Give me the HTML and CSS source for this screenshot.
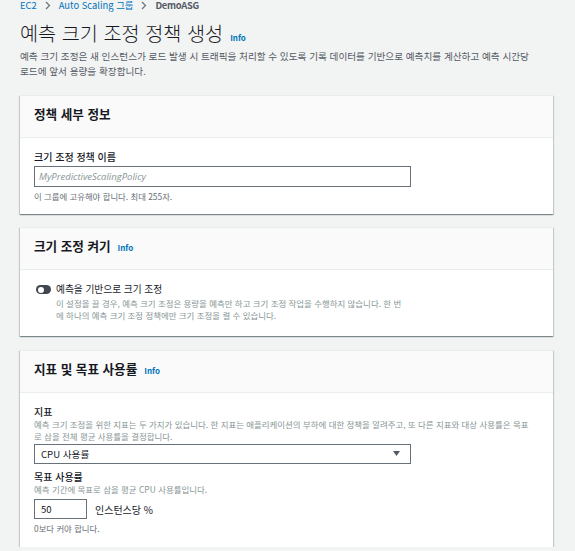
FILE: index.html
```html
<!DOCTYPE html>
<html lang="ko">
<head>
	<meta charset="utf-8" />
	<title>예측 크기 조정 정책 생성</title>
	<link rel="stylesheet" href="styles.css">
</head>
<body>
	<!-- 경로 -->
	<nav class="crumbs">
		<a href="#">EC2</a>
		<svg class="chev" width="6" height="9" viewBox="0 0 6 9"><path d="M1 1l3.5 3.5L1 8" fill="none" stroke="#687078" stroke-width="1.2"/></svg>
		<a href="#">Auto Scaling 그룹</a>
		<svg class="chev" width="6" height="9" viewBox="0 0 6 9"><path d="M1 1l3.5 3.5L1 8" fill="none" stroke="#687078" stroke-width="1.2"/></svg>
		<span class="here">DemoASG</span>
	</nav>

	<h1 class="page-title">예측 크기 조정 정책 생성<a class="info" href="#">Info</a></h1>
	<p class="page-desc">예측 크기 조정은 새 인스턴스가 로드 발생 시 트래픽을 처리할 수 있도록 기록 데이터를 기반으로 예측치를 계산하고 예측 시간당<br>로드에 앞서 용량을 확장합니다.</p>

	<!-- 정책 세부 정보 -->
	<section class="card">
		<div class="card-head">
			<h2>정책 세부 정보</h2>
		</div>
		<div class="card-body">
			<div class="label">크기 조정 정책 이름</div>
			<div class="field wide">
				<span class="placeholder">MyPredictiveScalingPolicy</span>
			</div>
			<div class="hint">이 그룹에 고유해야 합니다. 최대 255자.</div>
		</div>
	</section>

	<!-- 크기 조정 켜기 -->
	<section class="card">
		<div class="card-head">
			<h2>크기 조정 켜기</h2><a class="info" href="#">Info</a>
		</div>
		<div class="card-body toggle-body">
			<div class="toggle-row">
				<span class="toggle"><span class="knob"></span></span>
				<div>
					<div class="toggle-label">예측을 기반으로 크기 조정</div>
					<div class="desc toggle-desc">이 설정을 끌 경우, 예측 크기 조정은 용량을 예측만 하고 크기 조정 작업을 수행하지 않습니다. 한 번<br>에 하나의 예측 크기 조정 정책에만 크기 조정을 켤 수 있습니다.</div>
				</div>
			</div>
		</div>
	</section>

	<!-- 지표 및 목표 사용률 -->
	<section class="card">
		<div class="card-head">
			<h2>지표 및 목표 사용률</h2><a class="info" href="#">Info</a>
		</div>
		<div class="card-body last-body">
			<div class="label">지표</div>
			<div class="desc">예측 크기 조정을 위한 지표는 두 가지가 있습니다. 한 지표는 애플리케이션의 부하에 대한 정책을 알려주고, 또 다른 지표와 대상 사용률은 목표<br>로 삼을 전체 평균 사용률을 결정합니다.</div>
			<div class="field wide select">
				<span>CPU 사용률</span>
				<svg width="7" height="6" viewBox="0 0 7 6"><path d="M0 0h7L3.5 5z" fill="#545b64"/></svg>
			</div>

			<div class="label spaced">목표 사용률</div>
			<div class="desc">예측 기간에 목표로 삼을 평균 CPU 사용률입니다.</div>
			<div class="target-row">
				<div class="field small"><span>50</span></div>
				<span class="unit">인스턴스당 %</span>
			</div>
			<div class="hint">0보다 커야 합니다.</div>
		</div>
	</section>
</body>
</html>
```

FILE: styles.css
```css
body {
	margin: 0;
	padding: 0 22px 0 20px;
	background-color: #f2f3f3;
	font-family: "Noto Sans CJK KR", "Noto Sans", sans-serif;
	color: #16191f;
}

a {
	text-decoration: none;
	color: #0073bb;
}

/* 경로 */
.crumbs {
	display: flex;
	align-items: center;
	gap: 7px;
	height: 10px;
	font-size: 9.4px;
	line-height: 10px;
}

.crumbs .here {
	color: #545b64;
	font-weight: 700;
	letter-spacing: -0.3px;
}

.chev {
	margin: 0 1px;
}

.page-title {
	display: flex;
	align-items: baseline;
	height: 26px;
	margin: 10px 0 0;
	font-size: 19.7px;
	line-height: 26px;
	font-weight: 300;
	color: #16191f;
}

.info {
	font-size: 8px;
	font-weight: 700;
	margin-left: 7px;
}

.page-desc {
	margin: 3px 0 0;
	font-size: 9.65px;
	line-height: 15px;
	color: #545b64;
	white-space: nowrap;
}

/* 카드 */
.card {
	margin-top: 16px;
	background-color: #fff;
	border-top: 1px solid #eaeded;
	box-shadow: 0 1px 1px 0 rgba(0, 28, 36, 0.3), 1px 1px 1px 0 rgba(0, 28, 36, 0.15), -1px 1px 1px 0 rgba(0, 28, 36, 0.15);
}

.card + .card {
	margin-top: 13px;
}

.card + .card + .card {
	margin-top: 14px;
}

.card-head {
	display: flex;
	align-items: baseline;
	box-sizing: border-box;
	height: 42px;
	padding: 10px 14px 0;
	background-color: #fafafa;
	border-bottom: 1px solid #eaeded;
}

.card-head h2 {
	margin: 0;
	font-size: 12.6px;
	line-height: 16px;
	font-weight: 700;
}

.card-body {
	padding: 12px 14px 12px;
}

.toggle-body {
	padding-bottom: 15px;
}

.last-body {
	padding-bottom: 13px;
}

.label {
	font-size: 10px;
	line-height: 14px;
	font-weight: 500;
}

.label.spaced {
	margin-top: 6px;
}

.desc {
	font-size: 8.45px;
	line-height: 11.5px;
	color: #879596;
	white-space: nowrap;
}

.toggle-desc {
	margin-top: 1px;
	line-height: 12px;
}

.hint {
	margin-top: 3px;
	font-size: 8.4px;
	line-height: 12px;
	color: #687078;
}

.field {
	display: flex;
	align-items: center;
	box-sizing: border-box;
	height: 21px;
	margin-top: 2px;
	padding: 0 6px;
	background-color: #fff;
	border: 1px solid #687078;
	font-size: 9.6px;
}

.field.wide {
	width: 377px;
}

.placeholder {
	font-family: "Open Sans", "Noto Sans", sans-serif;
	font-style: italic;
	font-size: 9.5px;
	color: #879596;
	margin-left: -2px;
}

.select {
	justify-content: space-between;
	height: 20px;
	padding-right: 10px;
}

.toggle-row {
	display: flex;
	align-items: flex-start;
	gap: 5px;
	padding-left: 2px;
}

.toggle {
	position: relative;
	flex: none;
	width: 15px;
	height: 9px;
	margin-top: 3px;
	border-radius: 5px;
	background-color: #414750;
}

.toggle .knob {
	position: absolute;
	left: 2px;
	top: 1.5px;
	width: 6px;
	height: 6px;
	border-radius: 50%;
	background-color: #fff;
}

.toggle-label {
	font-size: 9.7px;
	line-height: 14px;
}

.target-row {
	display: flex;
	align-items: center;
	gap: 8px;
	margin-top: 3px;
}

.field.small {
	width: 53px;
	height: 20px;
	margin-top: 0;
}

.unit {
	font-size: 10px;
	margin-top: 2px;
}
```
